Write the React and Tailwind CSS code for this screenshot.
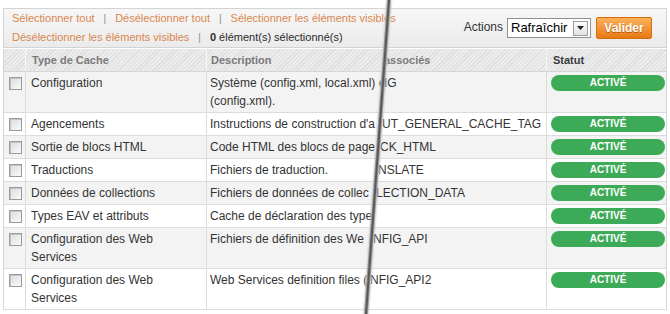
import React from 'react'

const FONT = { fontFamily: '"Liberation Sans", Arial, sans-serif' }

const ROWS = [
  { type: ['Configuration'], desc: ['Système (config.xml, local.xml) e', '(config.xml).'], descW: 'w-[173px]', tag: 'IG', alt: true },
  { type: ['Agencements'], desc: ["Instructions de construction d'a"], descW: 'w-[171px]', tag: 'UT_GENERAL_CACHE_TAG', alt: false },
  { type: ['Sortie de blocs HTML'], desc: ['Code HTML des blocs de page'], descW: 'w-[169px]', tag: 'CK_HTML', alt: true },
  { type: ['Traductions'], desc: ['Fichiers de traduction.'], descW: 'w-[167px]', tag: 'NSLATE', alt: false },
  { type: ['Données de collections'], desc: ['Fichiers de données de collec'], descW: 'w-[165px]', tag: 'LECTION_DATA', alt: true },
  { type: ['Types EAV et attributs'], desc: ['Cache de déclaration des type'], descW: 'w-[164px]', tag: '', alt: false },
  { type: ['Configuration des Web', 'Services'], desc: ['Fichiers de définition des We'], descW: 'w-[162px]', tag: 'NFIG_API', alt: true },
  { type: ['Configuration des Web', 'Services'], desc: ['Web Services definition files ('], descW: 'w-[159px]', tag: 'NFIG_API2', alt: false },
]

function Sep() {
  return <span className="mx-[9px] text-[#8a8a8a] text-[10px]">|</span>
}

function Checkbox() {
  return (
    <span className="block w-[13px] h-[13px] border border-[#9a9a9a] bg-gradient-to-br from-[#dcdcdc] to-[#fafafa] shadow-[inset_1px_1px_0_#c4c4c4]" />
  )
}

function Toolbar() {
  return (
    <div className="ml-[3px] w-[664px] h-[40px] border border-[#d3d3d3] bg-gradient-to-b from-[#f7f7f7] to-[#ebebeb] flex items-center justify-between pl-[8px] pr-[14px]">
      <div className="flex flex-col text-[11px] leading-[19px] text-[#d9874e]">
        <div className="flex items-center">
          <span>Sélectionner tout</span>
          <Sep />
          <span>Désélectionner tout</span>
          <Sep />
          <span>Sélectionner les éléments visibles</span>
        </div>
        <div className="flex items-center">
          <span>Désélectionner les éléments visibles</span>
          <Sep />
          <span className="text-[#2b2b2b]"><b>0</b> élément(s) sélectionné(s)</span>
        </div>
      </div>
      <div className="flex items-center">
        <span className="text-[12px] text-[#333] mr-[4px] -mt-[3px]">Actions</span>
        <div className="w-[84px] h-[20px] border border-[#8f8f8f] bg-white flex items-center justify-between pl-[3px] pr-[2px]">
          <span className="text-[13px] text-black">Rafraîchir</span>
          <span className="w-[15px] h-[15px] border border-[#9d9d9d] bg-gradient-to-b from-[#fdfdfd] to-[#e2e2e2] flex items-center justify-center">
            <svg width="7" height="4" viewBox="0 0 7 4"><path d="M0 0h7L3.5 4z" fill="#222" /></svg>
          </span>
        </div>
        <div className="ml-[5px] w-[56px] h-[22px] rounded-[2px] border border-[#d46d0c] bg-gradient-to-b from-[#fbb157] to-[#e8780f] flex items-center justify-center text-[12px] font-bold text-white [text-shadow:0_1px_0_#b85a00]">
          Valider
        </div>
      </div>
    </div>
  )
}

function HeaderRow() {
  return (
    <div className="grid grid-cols-[21px_181px_340px_122px] h-[23px] border-b border-[#d6d6d6] bg-[repeating-linear-gradient(135deg,#dedede_0px,#dedede_1px,#ececec_1px,#ececec_3px)] text-[11px] font-bold text-[#7a7a7a]">
      <div />
      <div className="border-l border-[#f7f7f7] pl-[6px] flex items-center">Type de Cache</div>
      <div className="border-l border-[#f7f7f7] pl-[4px] flex items-center relative">
        <span>Description</span>
        <span className="absolute left-[177px]">associés</span>
      </div>
      <div className="border-l border-[#f7f7f7] pl-[6px] flex items-center text-[#3a3a3a]">Statut</div>
    </div>
  )
}

function Row({ r }) {
  return (
    <div className={`grid grid-cols-[21px_181px_340px_122px] border-b border-[#dcdcdc] text-[12px] leading-[18px] text-[#333] ${r.alt ? 'bg-[#f3f3f3]' : 'bg-white'}`}>
      <div className="pl-[5px] pt-[5px]"><Checkbox /></div>
      <div className="border-l border-[#dcdcdc] pl-[5px] py-[2px]">
        {r.type.map((t, i) => <div key={i}>{t}</div>)}
      </div>
      <div className="border-l border-[#dcdcdc] pl-[3px] py-[2px] flex">
        <div className={`${r.descW} overflow-hidden whitespace-nowrap`}>
          {r.desc.map((d, i) => <div key={i}>{d}</div>)}
        </div>
        <div className="pl-[1px] whitespace-nowrap">{r.tag}</div>
      </div>
      <div className="border-l border-[#dcdcdc] pl-[4px] pr-[3px] pt-[3px]">
        <div className="h-[16px] rounded-full bg-[#3daa57] flex items-center justify-center text-[10px] font-bold text-white leading-none">ACTIVÉ</div>
      </div>
    </div>
  )
}

function Tear() {
  return (
    <svg className="absolute inset-0 pointer-events-none" width="670" height="314" viewBox="0 0 670 314">
      <line x1="389" y1="0" x2="366" y2="314" stroke="#cfcfcf" strokeWidth="7" opacity="0.5" />
      <line x1="389" y1="0" x2="366" y2="314" stroke="#9a9a9a" strokeWidth="4" />
      <line x1="389" y1="0" x2="366" y2="314" stroke="#5a5a5a" strokeWidth="2" />
    </svg>
  )
}

export default function App() {
  return (
    <div style={FONT} className="relative w-[670px] h-[314px] bg-white overflow-hidden pt-[8px]">
      <Toolbar />
      <div className="ml-[3px] w-[664px] border-l border-r border-[#d6d6d6] mt-[1px]">
        <HeaderRow />
        {ROWS.map((r, i) => <Row key={i} r={r} />)}
      </div>
      <Tear />
    </div>
  )
}
